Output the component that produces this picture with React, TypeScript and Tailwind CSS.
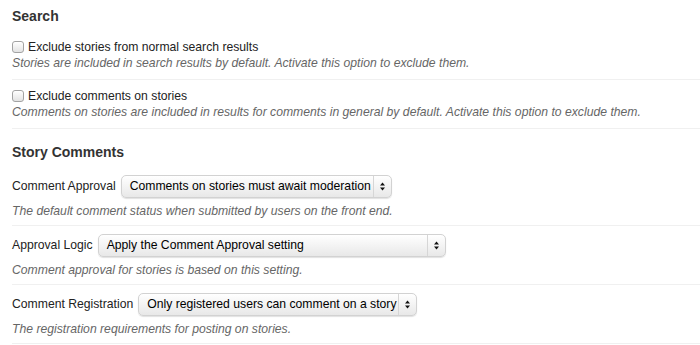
import React from 'react';

const CheckRow: React.FC<{ label: string; help: string }> = ({ label, help }) => (
  <div className="pt-2 pb-2 border-b border-[#f0f0f0]">
    <label className="flex items-center h-4 text-[12.2px] leading-4 text-[#222]">
      <span className="w-[12px] h-[12px] mr-[4px] rounded-[3px] border border-[#a3a3a3] bg-gradient-to-b from-white to-[#e3e3e3] shadow-[inset_0_1px_0_rgba(255,255,255,0.8)]" />
      {label}
    </label>
    <p className="text-[12.2px] leading-4 italic text-[#666]">{help}</p>
  </div>
);

const FakeSelect: React.FC<{ value: string; width: string }> = ({ value, width }) => (
  <div
    className={`${width} h-[23px] flex items-center rounded-[5px] border border-[#d2d2d2] bg-gradient-to-b from-white to-[#e8e8e8] shadow-[0_1px_1px_rgba(0,0,0,0.12)] text-[12.2px] text-black`}
  >
    <span className="flex-1 pl-[8px] whitespace-nowrap overflow-hidden">{value}</span>
    <span className="h-full w-[18px] flex items-center justify-center border-l border-[#d6d6d6]">
      <svg width="5" height="9" viewBox="0 0 5 9">
        <path d="M2.5 0.5 L5 3.5 L0 3.5 Z" fill="#111" />
        <path d="M0 5.5 L5 5.5 L2.5 8.5 Z" fill="#111" />
      </svg>
    </span>
  </div>
);

const SelectRow: React.FC<{ label: string; value: string; width: string; help: string }> = ({ label, value, width, help }) => (
  <div className="pt-2 pb-[6px] border-b border-[#f0f0f0]">
    <div className="flex items-center gap-[5px]">
      <span className="text-[12.2px] text-[#222]">{label}</span>
      <FakeSelect value={value} width={width} />
    </div>
    <p className="mt-[5px] text-[12.2px] leading-4 italic text-[#666]">{help}</p>
  </div>
);

export default function App() {
  return (
    <div className="w-[700px] h-[345px] overflow-hidden bg-white pl-3 pt-[7px] font-['Liberation_Sans',Arial,sans-serif]">
      <h3 className="text-[14px] leading-[18px] font-bold text-[#333] mb-[6px]">Search</h3>
      <CheckRow
        label="Exclude stories from normal search results"
        help="Stories are included in search results by default. Activate this option to exclude them."
      />
      <CheckRow
        label="Exclude comments on stories"
        help="Comments on stories are included in results for comments in general by default. Activate this option to exclude them."
      />
      <h3 className="mt-[14px] text-[14px] leading-[18px] font-bold text-[#333] mb-[6px]">Story Comments</h3>
      <SelectRow
        label="Comment Approval"
        value="Comments on stories must await moderation"
        width="w-[271px]"
        help="The default comment status when submitted by users on the front end."
      />
      <SelectRow
        label="Approval Logic"
        value="Apply the Comment Approval setting"
        width="w-[348px]"
        help="Comment approval for stories is based on this setting."
      />
      <SelectRow
        label="Comment Registration"
        value="Only registered users can comment on a story"
        width="w-[279px]"
        help="The registration requirements for posting on stories."
      />
    </div>
  );
}
